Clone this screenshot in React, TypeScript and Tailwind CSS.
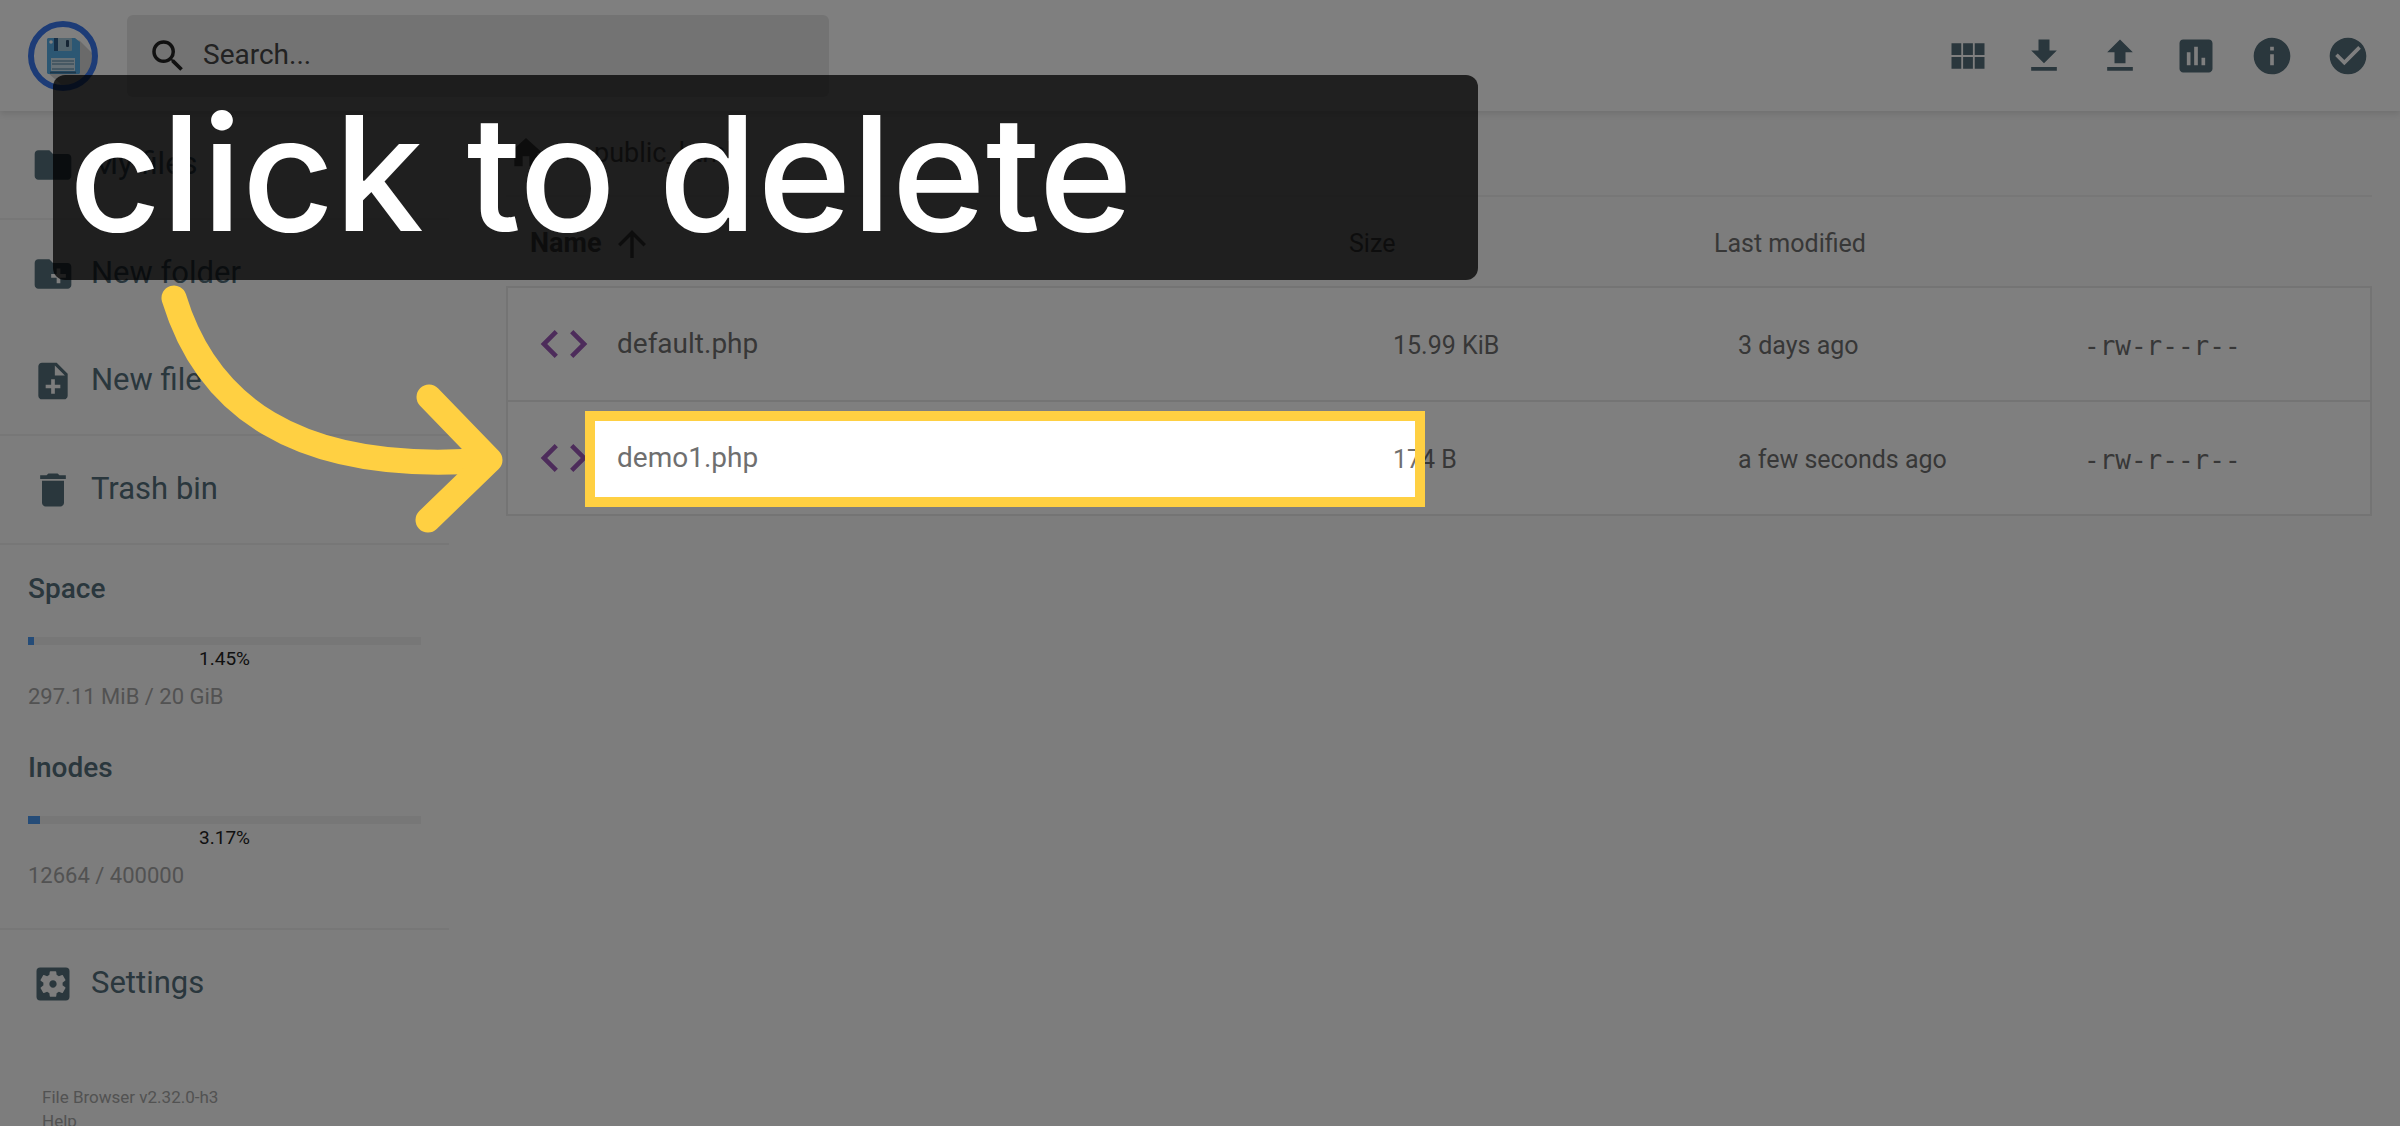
import type { ComponentType } from 'react';
import {
  MdArrowUpward,
  MdAssessment,
  MdCheckCircle,
  MdChevronRight,
  MdCode,
  MdCreateNewFolder,
  MdDelete,
  MdFileDownload,
  MdFileUpload,
  MdFolder,
  MdHome,
  MdInfo,
  MdNoteAdd,
  MdSearch,
  MdSettingsApplications,
  MdViewModule,
} from 'react-icons/md';

type Icon = ComponentType<{ className?: string }>;

const ACTIONS: { label: string; icon: Icon }[] = [
  { label: 'Switch view', icon: MdViewModule },
  { label: 'Download', icon: MdFileDownload },
  { label: 'Upload', icon: MdFileUpload },
  { label: 'Disk usage', icon: MdAssessment },
  { label: 'Info', icon: MdInfo },
  { label: 'Select multiple', icon: MdCheckCircle },
];

const FILES = [
  { name: 'default.php', size: '15.99 KiB', modified: '3 days ago', mode: '-rw-r--r--' },
  { name: 'demo1.php', size: '174 B', modified: 'a few seconds ago', mode: '-rw-r--r--' },
];

function Logo() {
  return (
    <svg viewBox="0 0 70 70" className="size-[70px] shrink-0" aria-hidden="true">
      <circle cx="35" cy="35" r="32" fill="#fff" />
      <path d="M51 19 L66 34 A32 32 0 0 1 36 66 L20 52 Z" fill="#d4d4d4" />
      <path d="M20 17 H47 L52 21 V52 L51 53 H20 L19 52 V18 Z" fill="#58aee6" />
      <rect x="26" y="17" width="18" height="13" rx="1" fill="#a4c8da" />
      <rect x="26" y="17" width="4" height="13" fill="#2f5f8c" />
      <rect x="38" y="19" width="3" height="7" rx="1" fill="#2b4a68" />
      <circle cx="23" cy="21" r="1.8" fill="#fff" />
      <rect x="23" y="37" width="24" height="13" fill="#cfe3ee" />
      <path d="M24 40H46M24 43H46M24 48H46" stroke="#4d7f9e" strokeWidth="1" />
      <path d="M22 51.5H48" stroke="#3c6f94" strokeWidth="2" />
      <circle cx="35" cy="35" r="32" fill="none" stroke="#3b78ee" strokeWidth="6" />
    </svg>
  );
}

function NavItem({ label, icon: ItemIcon }: { label: string; icon: Icon }) {
  return (
    <button type="button" className="flex h-[107px] w-full items-center gap-4 pl-[31px] text-[31px] text-[#546e7a]">
      <ItemIcon className="size-11" />
      <span>{label}</span>
    </button>
  );
}

interface QuotaProps {
  title: string;
  percent: number;
  detail: string;
}

function Quota({ title, percent, detail }: QuotaProps) {
  return (
    <section>
      <h2 className="text-[28px] leading-8 font-medium text-[#546e7a]">{title}</h2>
      <div className="mt-8 h-2 bg-[#eeeeee]">
        <div className="h-full bg-[#4a98f0]" style={{ width: `${percent}%` }} />
      </div>
      <p className="mt-1 text-center text-[19px] leading-5 text-[#222222]">{percent}%</p>
      <p className="mt-4 text-[22px] leading-6 text-[#a5a5a5]">{detail}</p>
    </section>
  );
}

function Sidebar() {
  return (
    <aside className="w-[449px] shrink-0">
      <nav>
        <div className="border-b-2 border-[#efefef]">
          <NavItem label="My files" icon={MdFolder} />
        </div>
        <div className="border-b-2 border-[#efefef]">
          <NavItem label="New folder" icon={MdCreateNewFolder} />
          <NavItem label="New file" icon={MdNoteAdd} />
        </div>
        <div className="border-b-2 border-[#efefef]">
          <NavItem label="Trash bin" icon={MdDelete} />
        </div>
      </nav>
      <div className="flex flex-col gap-[43px] border-b-2 border-[#efefef] px-7 pt-7 pb-10">
        <Quota title="Space" percent={1.45} detail="297.11 MiB / 20 GiB" />
        <Quota title="Inodes" percent={3.17} detail="12664 / 400000" />
      </div>
      <NavItem label="Settings" icon={MdSettingsApplications} />
      <div className="mt-12 flex flex-col items-start pl-[42px] text-[17px] leading-6 text-[#a5a5a5]">
        <span>File Browser v2.32.0-h3</span>
        <a href="#help">Help</a>
      </div>
    </aside>
  );
}

function FileTable() {
  return (
    <table className="w-full table-fixed border-collapse text-left text-[25px] text-[#6f6f6f]">
      <colgroup>
        <col className="w-[842px]" />
        <col className="w-[365px]" />
        <col className="w-[350px]" />
        <col />
      </colgroup>
      <thead>
        <tr className="h-[90px]">
          <th className="pt-1 pl-[23px] text-[27px] font-bold">
            <button type="button" className="flex items-center gap-2.5">
              Name
              <MdArrowUpward className="size-[42px]" />
            </button>
          </th>
          <th className="pt-1 font-normal">Size</th>
          <th className="pt-1 font-normal">Last modified</th>
          <th aria-label="Permissions" />
        </tr>
      </thead>
      <tbody>
        {FILES.map((file) => (
          <tr key={file.name} className="h-[114px] border-2 border-[#e8e8e8] bg-white">
            <td className="pl-7 text-[28px]">
              <a href="#file" className="flex items-center gap-[25px]">
                <MdCode className="size-14 text-[#9b59b6]" />
                {file.name}
              </a>
            </td>
            <td className="pt-1 pl-11">{file.size}</td>
            <td className="pt-1 pl-6">{file.modified}</td>
            <td className="pt-1 pl-5 font-['DejaVu_Sans_Mono',monospace] text-[26px]">{file.mode}</td>
          </tr>
        ))}
      </tbody>
    </table>
  );
}

// Walkthrough layer: dims the page, rings the target and points at it
function Callout() {
  return (
    <div className="pointer-events-none absolute inset-0">
      <div className="absolute top-[411px] left-[585px] h-24 w-[840px] border-10 border-[#ffd042] shadow-[0_0_0_3000px_rgba(0,0,0,0.5)]" />
      <div className="absolute top-[75px] left-[53px] flex h-[205px] w-[1425px] items-center rounded-xl bg-black/75 px-4 pb-2.5">
        <p className="font-['Inter',sans-serif] text-[160px] leading-none font-medium text-white">click to delete</p>
      </div>
      <svg
        className="absolute top-[280px] left-[160px] h-[260px] w-[350px]"
        viewBox="160 280 350 260"
        fill="none"
        stroke="#ffd042"
        strokeWidth="25"
        strokeLinecap="round"
        strokeLinejoin="round"
        aria-hidden="true"
      >
        <path d="M174 298C205 400 290 476 489 460" />
        <path d="M429 397L490 460L428 520" />
      </svg>
    </div>
  );
}

export default function App() {
  return (
    <div className="relative flex h-screen flex-col overflow-hidden bg-[#fafafa] font-['Roboto',sans-serif]">
      <header className="z-0 flex h-[111px] shrink-0 items-center bg-white pr-[14px] pl-7 shadow-[0_3px_6px_rgba(0,0,0,0.1)]">
        <Logo />
        <label className="ml-[29px] flex h-[82px] w-[702px] items-center gap-3.5 rounded-md bg-[#e6e6e6] pl-5">
          <MdSearch className="size-[42px] text-[#222222]" />
          <input
            type="text"
            aria-label="Search"
            placeholder="Search..."
            className="min-w-0 flex-1 bg-transparent pb-0.5 text-[28px] outline-none placeholder:text-[#444444]"
          />
        </label>
        <div className="ml-auto flex">
          {ACTIONS.map(({ label, icon: ActionIcon }) => (
            <button key={label} type="button" aria-label={label} className="p-4 text-[#546e7a]">
              <ActionIcon className="size-11" />
            </button>
          ))}
        </div>
      </header>
      <div className="flex flex-1">
        <Sidebar />
        <main className="min-w-0 flex-1 pr-7 pl-[57px]">
          <div className="flex h-[86px] items-center gap-2.5 border-b-2 border-[#efefef] text-[27px] text-[#6f6f6f]">
            <MdHome className="size-10" />
            <MdChevronRight className="size-7" />
            <a href="#public_html">public_html</a>
          </div>
          <FileTable />
        </main>
      </div>
      <Callout />
    </div>
  );
}
